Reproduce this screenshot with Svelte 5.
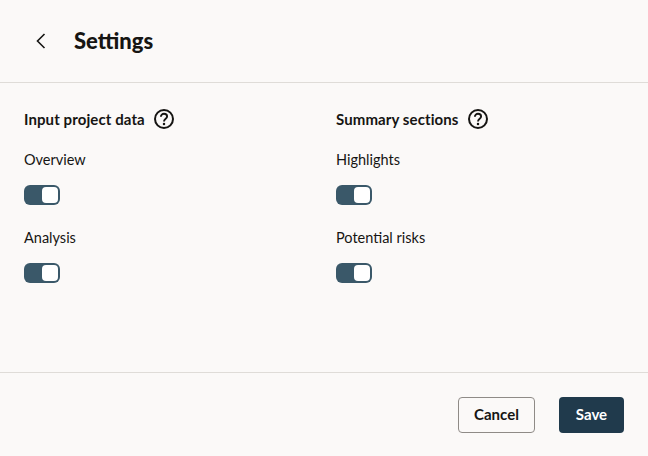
<script lang="ts">
	const columns = [
		{ title: 'Input project data', toggles: ['Overview', 'Analysis'] },
		{ title: 'Summary sections', toggles: ['Highlights', 'Potential risks'] }
	];
</script>

<div class="page">
	<header class="header">
		<button class="back" aria-label="Back">
			<svg width="12" height="16" viewBox="0 0 12 16" fill="none">
				<path d="M9.5 1 L2.5 8 L9.5 15" stroke="#161513" stroke-width="1.6" />
			</svg>
		</button>
		<h1>Settings</h1>
	</header>

	<main class="body">
		{#each columns as col}
			<section class="col">
				<div class="col-head">
					<h2>{col.title}</h2>
					<svg class="help" width="20" height="20" viewBox="0 0 20 20" fill="none">
						<circle cx="10" cy="10" r="9" stroke="#161513" stroke-width="2" />
						<path d="M6.9 7.8 C6.9 5.9 8.3 4.8 10 4.8 C11.8 4.8 13.1 5.9 13.1 7.5 C13.1 9.7 10 9.8 10 12.4" stroke="#161513" stroke-width="1.9" />
						<circle cx="10" cy="15" r="1.25" fill="#161513" />
					</svg>
				</div>
				{#each col.toggles as label}
					<div class="field">
						<span class="label">{label}</span>
						<span class="switch"><span class="knob"></span></span>
					</div>
				{/each}
			</section>
		{/each}
	</main>

	<footer class="footer">
		<button class="btn cancel">Cancel</button>
		<button class="btn save">Save</button>
	</footer>
</div>

<style>
	:global(body) {
		background: #fbf9f8;
	}

	.page {
		width: 648px;
		height: 456px;
		display: flex;
		flex-direction: column;
		box-sizing: border-box;
		background: #fbf9f8;
		color: #161513;
		font-family: 'Lato', 'Noto Sans', sans-serif;
		overflow: hidden;
	}

	.header {
		height: 83px;
		box-sizing: border-box;
		display: flex;
		align-items: center;
		gap: 27px;
		padding-left: 35px;
		border-bottom: 1px solid #dfdcd8;
	}

	.back {
		display: flex;
		width: 12px;
		padding: 0;
		border: 0;
		background: none;
	}

	h1 {
		margin: 0;
		font-size: 22px;
		font-weight: 900;
		line-height: 28px;
	}

	.body {
		flex: 1;
		display: grid;
		grid-template-columns: 312px 1fr;
		padding: 26px 24px 0;
	}

	.col-head {
		display: flex;
		align-items: center;
		gap: 9px;
		height: 20px;
		margin-bottom: 21px;
	}

	h2 {
		margin: 0;
		font-size: 15px;
		font-weight: 700;
		line-height: 20px;
		letter-spacing: 0.1px;
	}

	.field {
		display: flex;
		flex-direction: column;
		align-items: flex-start;
		height: 78px;
		box-sizing: border-box;
	}

	.label {
		font-size: 14.5px;
		line-height: 19px;
		margin-bottom: 16px;
	}

	.switch {
		display: flex;
		justify-content: flex-end;
		align-items: center;
		width: 36px;
		height: 20px;
		box-sizing: border-box;
		padding-right: 2px;
		background: #3a5869;
		border-radius: 6px;
	}

	.knob {
		width: 16px;
		height: 16px;
		background: #fff;
		border-radius: 4px;
	}

	.footer {
		height: 84px;
		box-sizing: border-box;
		display: flex;
		justify-content: flex-end;
		align-items: center;
		gap: 24px;
		padding: 0 24px 0 0;
		border-top: 1px solid #dfdcd8;
	}

	.btn {
		height: 36px;
		box-sizing: border-box;
		border-radius: 4px;
		font-family: inherit;
		font-size: 15px;
		font-weight: 700;
		padding: 0 0 2px;
	}

	.cancel {
		width: 77px;
		background: transparent;
		border: 1px solid #8f8b87;
		color: #161513;
	}

	.save {
		width: 65px;
		background: #203a4c;
		border: 0;
		color: #fff;
	}
</style>
